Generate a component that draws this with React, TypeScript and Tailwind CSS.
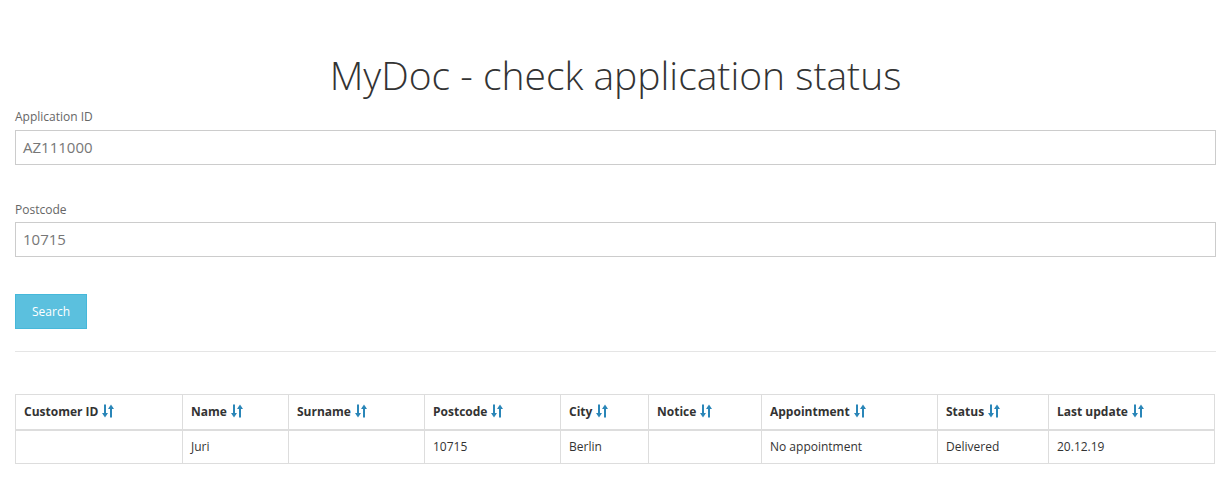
import React from "react";

const SortIcon = () => (
  <svg width="12" height="14" viewBox="0 0 12 14" className="inline-block ml-[4px] align-[-2px]" fill="#2a86b8">
    <rect x="2" y="0.5" width="2" height="10" />
    <polygon points="0,9 6,9 3,13.5" />
    <rect x="8" y="3.5" width="2" height="10" />
    <polygon points="6,5 12,5 9,0.5" />
  </svg>
);

const cols = [
  { h: "Customer ID", w: 167, v: "" },
  { h: "Name", w: 106, v: "Juri" },
  { h: "Surname", w: 136, v: "" },
  { h: "Postcode", w: 136, v: "10715" },
  { h: "City", w: 88, v: "Berlin" },
  { h: "Notice", w: 113, v: "" },
  { h: "Appointment", w: 176, v: "No appointment" },
  { h: "Status", w: 111, v: "Delivered" },
  { h: "Last update", w: 166, v: "20.12.19" },
];

export default function App() {
  return (
    <div className="bg-white w-[1231px] h-[499px] px-[15px] text-[#333]" style={{ fontFamily: '"Open Sans", sans-serif' }}>
      <h1 className="text-center font-light text-[39px] leading-[44px] pt-[53px] text-[#333]">
        MyDoc - check application status
      </h1>
      <div className="mt-[11px]">
        <label className="block text-[12px] leading-[17px] text-[#666] mb-[5px]">Application ID</label>
        <div className="h-[35px] border border-[#ccc] flex items-center px-[7px] text-[15px] text-[#777]">AZ111000</div>
      </div>
      <div className="mt-[36px]">
        <label className="block text-[12px] leading-[17px] text-[#666] mb-[4px]">Postcode</label>
        <div className="h-[35px] border border-[#ccc] flex items-center px-[7px] text-[15px] text-[#777]">10715</div>
      </div>
      <div className="mt-[37px]">
        <button className="h-[35px] w-[72px] bg-[#5bc0de] text-white text-[12px] border border-[#46b8da]">Search</button>
      </div>
      <div className="mt-[22px] border-t border-[#e5e5e5]" />
      <table className="mt-[42px] border-collapse text-[12px] w-[1200px] table-fixed">
        <thead>
          <tr>
            {cols.map((c) => (
              <th
                key={c.h}
                style={{ width: c.w }}
                className="text-left font-bold h-[35px] px-[8px] border border-[#ddd] border-b-2 text-[#333]"
              >
                {c.h}
                <SortIcon />
              </th>
            ))}
          </tr>
        </thead>
        <tbody>
          <tr>
            {cols.map((c) => (
              <td key={c.h} className="h-[34px] px-[8px] border border-[#ddd] text-[#333]">
                {c.v}
              </td>
            ))}
          </tr>
        </tbody>
      </table>
    </div>
  );
}
